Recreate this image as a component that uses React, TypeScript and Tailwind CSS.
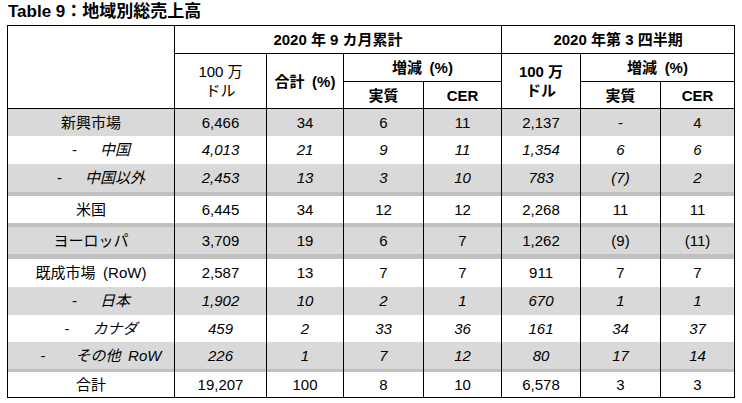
import React from "react";

type Row = {
  label: string;
  sub?: boolean;
  gap?: string;
  vals: string[];
  gray: boolean;
  h: string;
  band?: string;
  last?: boolean;
};

const rows: Row[] = [
  { label: "新興市場", vals: ["6,466", "34", "6", "11", "2,137", "-", "4"], gray: true, h: "h-[27px]" },
  { label: "中国", sub: true, vals: ["4,013", "21", "9", "11", "1,354", "6", "6"], gray: false, h: "h-[28px]" },
  { label: "中国以外", sub: true, vals: ["2,453", "13", "3", "10", "783", "(7)", "2"], gray: true, h: "h-[28px]", band: "h-[4px]" },
  { label: "米国", vals: ["6,445", "34", "12", "12", "2,268", "11", "11"], gray: false, h: "h-[27px]", band: "h-[4px]" },
  { label: "ヨーロッパ", vals: ["3,709", "19", "6", "7", "1,262", "(9)", "(11)"], gray: true, h: "h-[27px]", band: "h-[5px]" },
  { label: "既成市場\u2002(RoW)", vals: ["2,587", "13", "7", "7", "911", "7", "7"], gray: false, h: "h-[28px]" },
  { label: "日本", sub: true, vals: ["1,902", "10", "2", "1", "670", "1", "1"], gray: true, h: "h-[28px]" },
  { label: "カナダ", sub: true, vals: ["459", "2", "33", "36", "161", "34", "37"], gray: false, h: "h-[27px]" },
  { label: "その他\u2002RoW", sub: true, gap: "gap-[30px]", vals: ["226", "1", "7", "12", "80", "17", "14"], gray: true, h: "h-[27px]", band: "h-[3px]" },
  { label: "合計", vals: ["19,207", "100", "8", "10", "6,578", "3", "3"], gray: false, h: "h-[26px]", last: true },
];

export default function App() {
  return (
    <div className="w-[742px] h-[403px] bg-white text-black font-['Liberation_Sans','Noto_Sans_CJK_JP',sans-serif] overflow-hidden">
      <div className="h-[25px] pt-[1px] pl-[8px] text-[17px] leading-[22px] font-bold">Table 9：地域別総売上高</div>
      <table className="ml-[7px] w-[727px] table-fixed border-collapse text-[15px] leading-[19px]">
        <colgroup>
          <col className="w-[167px]" />
          <col className="w-[92px]" />
          <col className="w-[77px]" />
          <col className="w-[80px]" />
          <col className="w-[78px]" />
          <col className="w-[79px]" />
          <col className="w-[80px]" />
          <col className="w-[74px]" />
        </colgroup>
        <thead>
          <tr className="h-[28px]">
            <th rowSpan={3} className="border border-black p-0"></th>
            <th colSpan={4} className="border border-black p-0 font-bold">2020 年 9 カ月累計</th>
            <th colSpan={3} className="border border-black p-0 font-bold">2020 年第 3 四半期</th>
          </tr>
          <tr className="h-[28px]">
            <th rowSpan={2} className="border border-black p-0 font-normal">
              100 万
              <br />
              ドル
            </th>
            <th rowSpan={2} className="border border-black p-0 font-bold">合計{"\u2002"}(%)</th>
            <th colSpan={2} className="border border-black p-0 font-bold">増減{"\u2002"}(%)</th>
            <th rowSpan={2} className="border border-black p-0 font-bold">
              100 万
              <br />
              ドル
            </th>
            <th colSpan={2} className="border border-black p-0 font-bold">増減{"\u2002"}(%)</th>
          </tr>
          <tr className="h-[27px]">
            <th className="border border-black p-0 font-bold">実質</th>
            <th className="border border-black p-0 font-bold">CER</th>
            <th className="border border-black p-0 font-bold">実質</th>
            <th className="border border-black p-0 font-bold">CER</th>
          </tr>
        </thead>
        <tbody>
          {rows.map((r, i) => (
            <React.Fragment key={i}>
              <tr className={`${r.h} ${r.gray ? "bg-[#d9d9d9]" : "bg-white"}`}>
                <td className={`border-x border-black p-0 text-center ${r.last ? "border-b" : ""}`}>
                  {r.sub ? (
                    <div className={`flex justify-center items-center pl-[20px] ${r.gap ?? "gap-[23px]"}`}>
                      <span>-</span>
                      <span className="italic">{r.label}</span>
                    </div>
                  ) : (
                    r.label
                  )}
                </td>
                {r.vals.map((v, j) => (
                  <td
                    key={j}
                    className={`border-x border-black p-0 text-center ${r.sub ? "italic" : ""} ${r.last ? "border-b" : ""}`}
                  >
                    {v}
                  </td>
                ))}
              </tr>
              {r.band && (
                <tr className={`${r.band} bg-[#c0c0c0]`}>
                  {Array.from({ length: 8 }).map((_, k) => (
                    <td key={k} className="border-x border-black p-0"></td>
                  ))}
                </tr>
              )}
            </React.Fragment>
          ))}
        </tbody>
      </table>
    </div>
  );
}
